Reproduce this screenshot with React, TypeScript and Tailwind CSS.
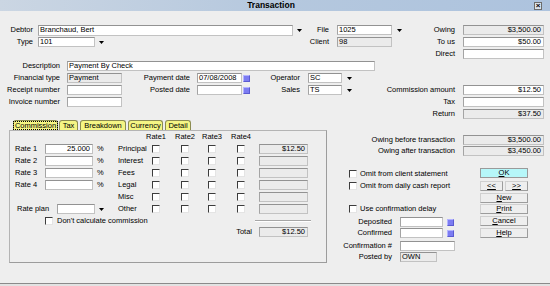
import React from "react";
import clsx from "clsx";

type FieldProps = {
  w: string;
  v?: string;
  ro?: boolean;
  right?: boolean;
  className?: string;
};

const Field: React.FC<FieldProps> = ({ w, v = "", ro = false, right = false, className = "" }) => (
  <div
    className={clsx(
      "flex h-[10px] shrink-0 items-center overflow-hidden whitespace-nowrap border border-[#c2c2c2] border-t-[#929292] border-l-[#a4a4a4] px-[1px]",
      ro ? "bg-[#ebebeb]" : "bg-white",
      right && "justify-end pr-[2px]",
      w,
      className
    )}
  >
    {v}
  </div>
);

const Label: React.FC<{ w: string; left?: boolean; children: React.ReactNode }> = ({ w, left, children }) => (
  <div className={clsx("shrink-0 whitespace-nowrap", left ? "text-left" : "text-right", w)}>{children}</div>
);

const Arrow: React.FC<{ className?: string }> = ({ className = "" }) => (
  <div className={clsx("flex h-[10px] w-[8px] shrink-0 items-center justify-center", className)}>
    <svg width="5" height="3" viewBox="0 0 5 3">
      <polygon points="0,0 5,0 2.5,3" fill="#000" />
    </svg>
  </div>
);

const Cal: React.FC<{ className?: string }> = ({ className = "" }) => (
  <div className={clsx("h-[7px] w-[7px] shrink-0 border border-[#b4b4ff] border-b-[#5a5ad0] border-r-[#5a5ad0] bg-[#7c7cf2]", className)} />
);

const Check: React.FC<{ className?: string }> = ({ className = "" }) => (
  <div
    className={clsx(
      "h-[8px] w-[8px] shrink-0 border border-t-[#3c3c3c] border-l-[#3c3c3c] border-r-[#e4e4e4] border-b-[#e4e4e4] bg-white",
      className
    )}
  />
);

const Btn: React.FC<{ w?: string; ok?: boolean; children: React.ReactNode; className?: string }> = ({
  w = "w-[48px]",
  ok,
  children,
  className = "",
}) => (
  <div
    className={clsx(
      "flex h-[10px] shrink-0 items-center justify-center border",
      ok
        ? "border-[#9a9a9a] bg-[#b6f7f9]"
        : "border-[#d0d0d0] border-b-[#9c9c9c] border-r-[#9c9c9c] bg-[#eeeeee]",
      w,
      className
    )}
  >
    {children}
  </div>
);

const Tab: React.FC<{ w: string; active?: boolean; children: React.ReactNode; className?: string }> = ({
  w,
  active,
  children,
  className = "",
}) => (
  <div
    className={clsx(
      "flex h-[10px] shrink-0 items-center justify-center rounded-t-[3px] border border-b-0 border-[#8c8c52] bg-[#f5f584]",
      w,
      className
    )}
  >
    {active ? <span className="border border-dotted border-black px-[1px] leading-[7px]">Commission</span> : children}
  </div>
);

const rateRows = ["Principal", "Interest", "Fees", "Legal", "Misc", "Other"];

export default function App() {
  return (
    <div className="flex h-[286px] w-[550px] flex-col overflow-hidden bg-[#eeeeee] font-['Liberation_Sans',Arial,sans-serif] text-[7.5px] leading-none text-black">
      {/* title bar */}
      <div className="flex h-[11px] shrink-0 items-center bg-gradient-to-r from-[#cbd6e3] via-[#b5c8de] to-[#adc3de]">
        <div className="flex-1" />
        <div className="text-[8.5px] font-bold">Transaction</div>
        <div className="flex flex-1 justify-end pr-[8px]">
          <div className="flex h-[8px] w-[8px] items-center justify-center border border-[#6c6c6c] bg-[#dde4ec] text-[8px] font-bold leading-none">
            ×
          </div>
        </div>
      </div>

      <div className="flex flex-col pt-[13px]">
        <div className="flex h-[12px] items-center">
          <Label w="w-[33px]">Debtor</Label>
          <Field w="w-[255px]" className="ml-[5px] h-[11px]" v="Branchaud, Bert" />
          <Arrow className="ml-[2px]" />
          <Label w="w-[26px]">File</Label>
          <Field w="w-[55px]" className="ml-[8px]" v="1025" />
          <Arrow className="ml-[3px]" />
          <Label w="w-[52px]">Owing</Label>
          <Field w="w-[81px]" className="ml-[8px]" v="$3,500.00" ro right />
        </div>
        <div className="flex h-[12px] items-center">
          <Label w="w-[33px]">Type</Label>
          <Field w="w-[57px]" className="ml-[5px]" v="101" />
          <Arrow className="ml-[2px]" />
          <Label w="w-[224px]">Client</Label>
          <Field w="w-[55px]" className="ml-[8px]" v="98" ro />
          <div className="w-[11px] shrink-0" />
          <Label w="w-[52px]">To us</Label>
          <Field w="w-[81px]" className="ml-[8px]" v="$50.00" right />
        </div>
        <div className="flex h-[12px] items-center">
          <Label w="w-[455px]">Direct</Label>
          <Field w="w-[81px]" className="ml-[8px]" />
        </div>
        <div className="flex h-[12px] items-center">
          <Label w="w-[60px]">Description</Label>
          <Field w="w-[308px]" className="ml-[7px]" v="Payment By Check" />
        </div>
        <div className="flex h-[12px] items-center">
          <Label w="w-[60px]">Financial type</Label>
          <Field w="w-[55px]" className="ml-[7px]" v="Payment" ro />
          <Label w="w-[68px]">Payment date</Label>
          <Field w="w-[45px]" className="ml-[7px]" v="07/08/2008" />
          <Cal className="ml-[1px]" />
          <Label w="w-[50px]">Operator</Label>
          <Field w="w-[34px]" className="ml-[8px]" v="SC" />
          <Arrow className="ml-[3px]" />
        </div>
        <div className="flex h-[12px] items-center">
          <Label w="w-[60px]">Receipt number</Label>
          <Field w="w-[55px]" className="ml-[7px]" />
          <Label w="w-[68px]">Posted date</Label>
          <Field w="w-[45px]" className="ml-[7px]" />
          <Cal className="ml-[1px]" />
          <Label w="w-[50px]">Sales</Label>
          <Field w="w-[34px]" className="ml-[8px]" v="TS" />
          <Arrow className="ml-[3px]" />
          <Label w="w-[102px]">Commission amount</Label>
          <Field w="w-[81px]" className="ml-[8px]" v="$12.50" right />
        </div>
        <div className="flex h-[12px] items-center">
          <Label w="w-[60px]">Invoice number</Label>
          <Field w="w-[55px]" className="ml-[7px]" />
          <Label w="w-[333px]">Tax</Label>
          <Field w="w-[81px]" className="ml-[8px]" />
        </div>
        <div className="flex h-[11px] items-center">
          <Label w="w-[455px]">Return</Label>
          <Field w="w-[81px]" className="ml-[8px]" v="$37.50" ro right />
        </div>
      </div>

      {/* lower area */}
      <div className="mt-[1px] flex">
        <div className="ml-[9px] flex w-[318px] shrink-0 flex-col">
          <div className="flex h-[10px] pl-[4px]">
            <Tab w="w-[45px]" active>Commission</Tab>
            <Tab w="w-[19px]" className="ml-[1px]">Tax</Tab>
            <Tab w="w-[46px]" className="ml-[2px]">Breakdown</Tab>
            <Tab w="w-[35px]" className="ml-[2px]">Currency</Tab>
            <Tab w="w-[26px]" className="ml-[2px]">Detail</Tab>
          </div>
          <div className="flex h-[133px] flex-col border border-[#b4b4b4] border-r-[#9c9c9c] border-b-[#9c9c9c]">
            <div className="flex h-[11px] items-center">
              <div className="w-[142px] shrink-0" />
              {["Rate1", "Rate2", "Rate3", "Rate4"].map((r, i) => (
                <div
                  key={r}
                  className={clsx(
                    "flex w-[8px] shrink-0 justify-center whitespace-nowrap",
                    i === 1 && "ml-[21px]",
                    i === 2 && "ml-[19px]",
                    i === 3 && "ml-[21px]"
                  )}
                >
                  {r}
                </div>
              ))}
            </div>
            <div className="mt-[1px] flex flex-col">
              {rateRows.map((name, i) => (
                <div key={name} className="flex h-[12px] items-center">
                  <div className="flex w-[108px] shrink-0 items-center">
                    {i < 4 && (
                      <>
                        <div className="w-[5px] shrink-0" />
                        <Label w="w-[30px]" left>
                          Rate {i + 1}
                        </Label>
                        <Field w="w-[48px]" v={i === 0 ? "25.000" : ""} right />
                        <div className="ml-[4px]">%</div>
                      </>
                    )}
                    {i === 5 && (
                      <>
                        <div className="w-[7px] shrink-0" />
                        <Label w="w-[40px]" left>
                          Rate plan
                        </Label>
                        <Field w="w-[38px]" />
                        <Arrow className="ml-[2px]" />
                      </>
                    )}
                  </div>
                  <Label w="w-[34px]" left>
                    {name}
                  </Label>
                  <Check />
                  <Check className="ml-[21px]" />
                  <Check className="ml-[19px]" />
                  <Check className="ml-[21px]" />
                  <Field w="w-[49px]" className="ml-[14px] h-[9px]" v={i === 0 ? "$12.50" : ""} ro right />
                </div>
              ))}
            </div>
            <div className="flex h-[11px] items-center">
              <div className="flex w-[245px] shrink-0 items-center">
                <Check className="ml-[35px]" />
                <div className="ml-[4px] whitespace-nowrap">Don't calculate commission</div>
              </div>
              <div className="h-[2px] w-[56px] border-t border-b border-t-[#a6a6a6] border-b-white" />
            </div>
            <div className="flex h-[11px] items-center">
              <Label w="w-[242px]">Total</Label>
              <Field w="w-[49px]" className="ml-[7px]" v="$12.50" ro right />
            </div>
          </div>
        </div>

        <div className="flex flex-1 flex-col">
          <div className="mt-[14px] flex h-[11px] items-center">
            <Label w="w-[128px]">Owing before transaction</Label>
            <Field w="w-[81px]" className="ml-[8px]" v="$3,500.00" ro right />
          </div>
          <div className="flex h-[11px] items-center">
            <Label w="w-[128px]">Owing after transaction</Label>
            <Field w="w-[81px]" className="ml-[8px]" v="$3,450.00" ro right />
          </div>
          <div className="mt-[12px] flex">
            <div className="flex w-[152px] shrink-0 flex-col">
              <div className="mt-[2px] flex h-[8px] items-center">
                <Check className="ml-[22px]" />
                <div className="ml-[3px] whitespace-nowrap">Omit from client statement</div>
              </div>
              <div className="mt-[4px] flex h-[8px] items-center">
                <Check className="ml-[22px]" />
                <div className="ml-[3px] whitespace-nowrap">Omit from daily cash report</div>
              </div>
              <div className="mt-[15px] flex h-[8px] items-center">
                <Check className="ml-[22px]" />
                <div className="ml-[3px] whitespace-nowrap">Use confirmation delay</div>
              </div>
              <div className="mt-[4px] flex h-[10px] items-center">
                <Label w="w-[65px]">Deposited</Label>
                <Field w="w-[43px]" className="ml-[8px]" />
                <Cal className="ml-[4px]" />
              </div>
              <div className="mt-[1px] flex h-[10px] items-center">
                <Label w="w-[65px]">Confirmed</Label>
                <Field w="w-[43px]" className="ml-[8px]" />
                <Cal className="ml-[4px]" />
              </div>
              <div className="mt-[3px] flex h-[10px] items-center">
                <Label w="w-[65px]">Confirmation #</Label>
                <Field w="w-[55px]" className="ml-[8px]" />
              </div>
              <div className="mt-[1px] flex h-[10px] items-center">
                <Label w="w-[65px]">Posted by</Label>
                <Field w="w-[37px]" className="ml-[8px]" v="OWN" ro />
              </div>
            </div>
            <div className="ml-[1px] flex w-[48px] shrink-0 flex-col">
              <Btn ok>
                <u>O</u>K
              </Btn>
              <div className="mt-[3px] flex justify-between">
                <Btn w="w-[23px]">
                  <u>&lt;&lt;</u>
                </Btn>
                <Btn w="w-[23px]">
                  <u>&gt;&gt;</u>
                </Btn>
              </div>
              <Btn className="mt-[2px]">
                <u>N</u>ew
              </Btn>
              <Btn className="mt-[1px]">
                <u>P</u>rint
              </Btn>
              <Btn className="mt-[2px]">
                <u>C</u>ancel
              </Btn>
              <Btn className="mt-[2px]">
                <u>H</u>elp
              </Btn>
            </div>
          </div>
        </div>
      </div>

      <div className="mt-auto h-[3px] shrink-0 border-t border-[#8a8a8a] bg-[#e2e2e2]" />
    </div>
  );
}
